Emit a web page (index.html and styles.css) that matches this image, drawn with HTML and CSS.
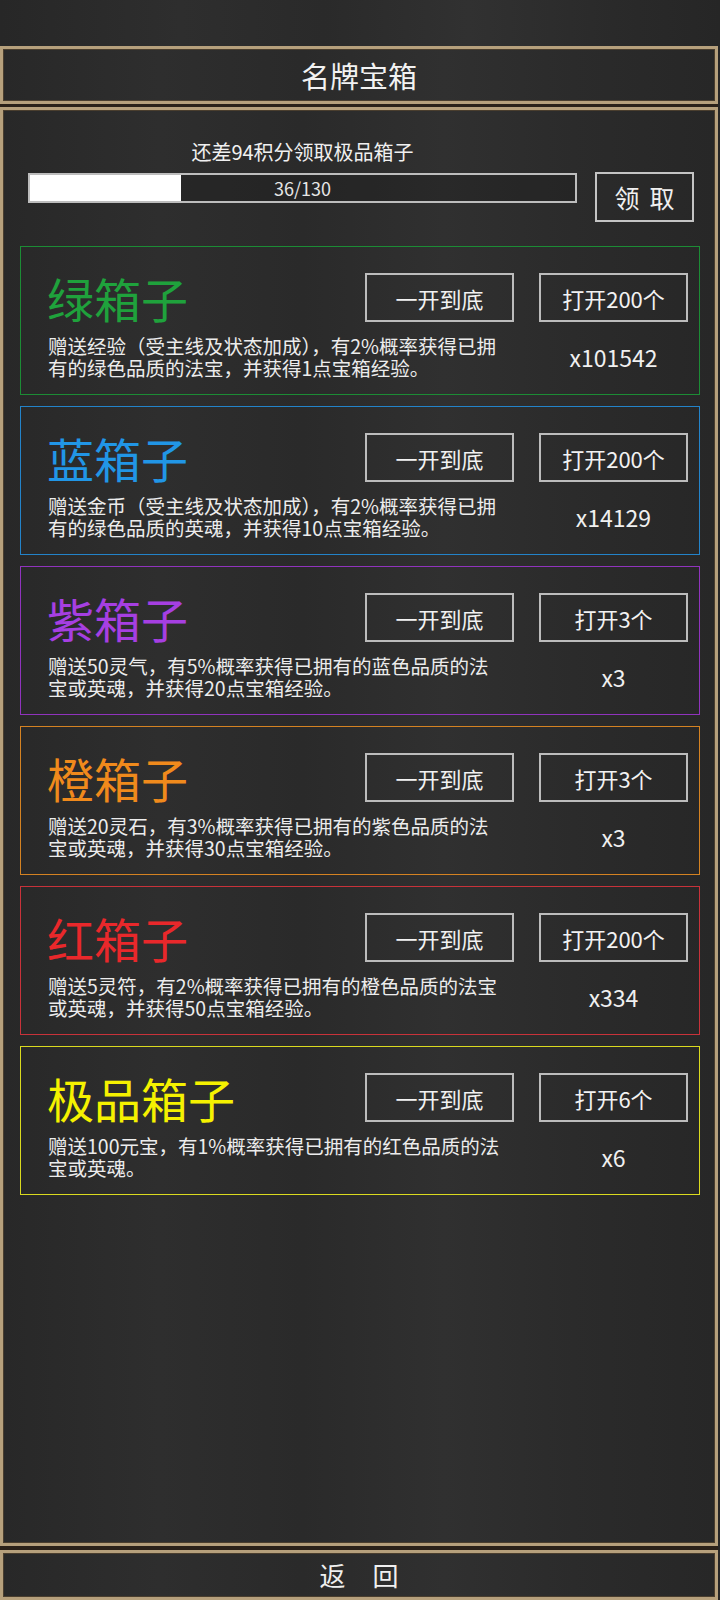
FILE: index.html
```html
<!DOCTYPE html>
<html lang="zh-CN">
<head>
<meta charset="utf-8">
<title>名牌宝箱</title>
<link rel="stylesheet" href="styles.css">
</head>
<body>
<div class="screen">
  <div class="status-space"></div>
  <div class="frame">
    <header class="panel header">
      <h1 class="header-title">名牌宝箱</h1>
    </header>
    <main class="panel main">
      <section class="progress-area">
        <div class="progress-label">还差94积分领取极品箱子</div>
        <div class="progress-bar">
          <div class="progress-fill" style="width:151px"></div>
          <span class="progress-text">36/130</span>
        </div>
        <button class="claim-btn">领取</button>
      </section>

      <section class="box-list">
        <div class="box box-green">
          <div class="box-title">绿箱子</div>
          <button class="btn btn-all">一开到底</button>
          <button class="btn btn-open">打开200个</button>
          <p class="box-desc">赠送经验（受主线及状态加成），有2%概率获得已拥<br>有的绿色品质的法宝，并获得1点宝箱经验。</p>
          <div class="box-count">x101542</div>
        </div>
        <div class="box box-blue">
          <div class="box-title">蓝箱子</div>
          <button class="btn btn-all">一开到底</button>
          <button class="btn btn-open">打开200个</button>
          <p class="box-desc">赠送金币（受主线及状态加成），有2%概率获得已拥<br>有的绿色品质的英魂，并获得10点宝箱经验。</p>
          <div class="box-count">x14129</div>
        </div>
        <div class="box box-purple">
          <div class="box-title">紫箱子</div>
          <button class="btn btn-all">一开到底</button>
          <button class="btn btn-open">打开3个</button>
          <p class="box-desc">赠送50灵气，有5%概率获得已拥有的蓝色品质的法<br>宝或英魂，并获得20点宝箱经验。</p>
          <div class="box-count">x3</div>
        </div>
        <div class="box box-orange">
          <div class="box-title">橙箱子</div>
          <button class="btn btn-all">一开到底</button>
          <button class="btn btn-open">打开3个</button>
          <p class="box-desc">赠送20灵石，有3%概率获得已拥有的紫色品质的法<br>宝或英魂，并获得30点宝箱经验。</p>
          <div class="box-count">x3</div>
        </div>
        <div class="box box-red">
          <div class="box-title">红箱子</div>
          <button class="btn btn-all">一开到底</button>
          <button class="btn btn-open">打开200个</button>
          <p class="box-desc">赠送5灵符，有2%概率获得已拥有的橙色品质的法宝<br>或英魂，并获得50点宝箱经验。</p>
          <div class="box-count">x334</div>
        </div>
        <div class="box box-yellow">
          <div class="box-title">极品箱子</div>
          <button class="btn btn-all">一开到底</button>
          <button class="btn btn-open">打开6个</button>
          <p class="box-desc">赠送100元宝，有1%概率获得已拥有的红色品质的法<br>宝或英魂。</p>
          <div class="box-count">x6</div>
        </div>
      </section>
    </main>
    <footer class="panel footer">
      <button class="back-btn">返回</button>
    </footer>
  </div>
</div>
</body>
</html>
```

FILE: styles.css
```css
* { box-sizing: border-box; }

html, body {
  margin: 0;
  padding: 0;
}

body {
  width: 720px;
  height: 1600px;
  overflow: hidden;
  background: #2b2b2b;
  font-family: "Noto Sans CJK SC", "Noto Sans", sans-serif;
  color: #f0f0f0;
}

.screen {
  width: 720px;
  height: 1600px;
  display: flex;
  flex-direction: column;
  background: linear-gradient(90deg, #272727 0%, #2e2e2e 25%, #2a2a2a 45%, #313131 65%, #2a2a2a 85%, #262626 100%);
}

.status-space {
  height: 46px;
  flex: none;
}

.frame {
  width: 718px;
  flex: 1;
  display: flex;
  flex-direction: column;
  background: #2a2119;
}

.panel {
  border: 3px solid #b6a07c;
  box-shadow: inset 0 0 0 1px #4a3e2e;
  background: linear-gradient(90deg, #282828 0%, #2e2e2e 22%, #2a2a2a 42%, #303030 62%, #2b2b2b 80%, #272727 100%);
}

.header {
  height: 58px;
  flex: none;
  display: flex;
  align-items: center;
  justify-content: center;
}

.header-title {
  margin: 0;
  font-size: 29px;
  font-weight: 400;
  line-height: 1;
  color: #f2f2f2;
}

.main {
  margin-top: 3px;
  height: 1439px;
  flex: none;
  padding: 30px 15px 0 17px;
}

.progress-area {
  display: grid;
  grid-template-columns: 549px 99px;
  column-gap: 18px;
  row-gap: 9px;
  margin: 0 6px 0 8px;
}

.progress-label {
  grid-column: 1;
  grid-row: 1;
  text-align: center;
  font-size: 20px;
  line-height: 24px;
  color: #f0f0f0;
}

.progress-bar {
  grid-column: 1;
  grid-row: 2;
  position: relative;
  height: 30px;
  border: 2px solid #bdbdbd;
  background: rgba(20, 20, 20, 0.25);
  display: flex;
  align-items: center;
  justify-content: center;
}

.progress-fill {
  position: absolute;
  left: 0;
  top: 0;
  bottom: 0;
  background: #ffffff;
}

.progress-text {
  position: relative;
  font-size: 18px;
  line-height: 1;
  color: #e6e6e6;
}

.claim-btn {
  grid-column: 2;
  grid-row: 2;
  align-self: start;
  margin-top: -1px;
  height: 50px;
  border: 2px solid #c4c4c4;
  background: transparent;
  color: #f0f0f0;
  font-family: inherit;
  font-size: 25px;
  letter-spacing: 10px;
  text-indent: 10px;
  padding: 0;
  line-height: 1;
}

.box-list {
  margin-top: 24px;
  display: flex;
  flex-direction: column;
  gap: 11px;
}

.box {
  height: 149px;
  border: 1px solid;
  padding: 26px 11px 0 26px;
  display: grid;
  grid-template-columns: 1fr 149px 149px;
  grid-template-rows: 49px 44px;
  column-gap: 25px;
  row-gap: 13px;
}

.box-title {
  grid-column: 1;
  grid-row: 1;
  font-size: 47px;
  line-height: 49px;
  white-space: nowrap;
}

.btn {
  grid-row: 1;
  height: 49px;
  border: 2px solid #bcbcbc;
  background: transparent;
  color: #f2f2f2;
  font-family: inherit;
  font-size: 22px;
  line-height: 1;
  padding: 0;
}

.btn-all { grid-column: 2; }
.btn-open { grid-column: 3; }

.box-desc {
  grid-column: 1 / 3;
  grid-row: 2;
  margin: 0 0 0 1px;
  font-size: 19.5px;
  line-height: 22px;
  white-space: nowrap;
  color: #ececec;
}

.box-count {
  grid-column: 3;
  grid-row: 2;
  align-self: center;
  text-align: center;
  font-size: 23px;
  line-height: 1;
  color: #f0f0f0;
}

.box-green { border-color: #1c8c35; }
.box-green .box-title { color: #1fa23c; }

.box-blue { border-color: #2383c9; }
.box-blue .box-title { color: #2196e6; }

.box-purple { border-color: #9033bd; }
.box-purple .box-title { color: #a63fe2; }

.box-orange { border-color: #d48222; }
.box-orange .box-title { color: #f08a1c; }

.box-red { border-color: #c8323a; }
.box-red .box-title { color: #e9282b; }

.box-yellow { border-color: #dada1f; }
.box-yellow .box-title { color: #f5f100; }

.footer {
  margin-top: 4px;
  flex: 1;
  display: flex;
  align-items: center;
  justify-content: center;
}

.back-btn {
  border: none;
  background: transparent;
  color: #f0f0f0;
  font-family: inherit;
  font-size: 26px;
  line-height: 1;
  letter-spacing: 27px;
  text-indent: 27px;
  padding: 0;
}
```
